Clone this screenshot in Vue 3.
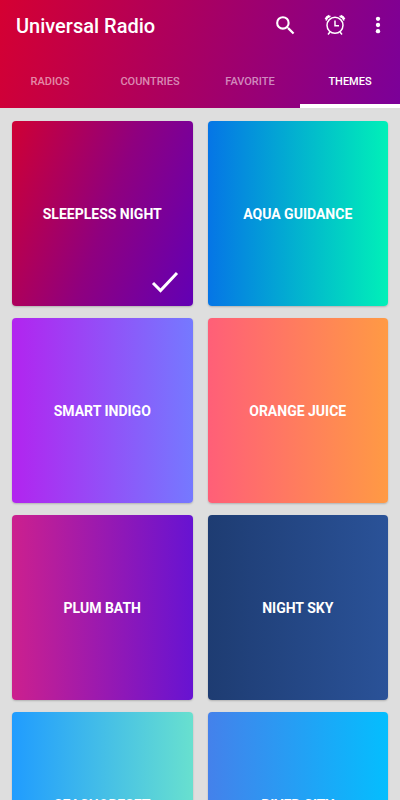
<template>
  <div class="screen">
    <header class="app-header">
      <div class="toolbar">
        <h1>Universal Radio</h1>
        <button type="button" class="icon-button" aria-label="Search">
          <svg viewBox="0 0 24 24" width="25" height="25" fill="currentColor">
            <path d="M15.5 14h-.79l-.28-.27A6.47 6.47 0 0 0 16 9.5 6.5 6.5 0 1 0 9.5 16c1.61 0 3.09-.59 4.23-1.57l.27.28v.79l5 4.99L20.49 19zM9.5 14A4.5 4.5 0 1 1 14 9.5 4.49 4.49 0 0 1 9.5 14z" />
          </svg>
        </button>
        <button type="button" class="icon-button" aria-label="Alarm">
          <svg viewBox="0 0 24 24" width="24" height="24" fill="none" stroke="currentColor" stroke-width="1.5">
            <circle cx="12" cy="12.3" r="8" />
            <path d="M12 7.500v5.300h4M7 19l-2 2.500M17 19l2 2.500M3 7.500C3.500 5.500 5.500 3.800 7.500 3.300M2.300 6C3 4.500 4.500 3.200 6.300 2.500M21 7.500C20.500 5.500 18.500 3.800 16.500 3.300M21.700 6C21 4.500 19.500 3.200 17.700 2.500" />
          </svg>
        </button>
        <button type="button" class="icon-button more" aria-label="More options">
          <svg viewBox="0 0 24 24" width="26" height="26" fill="currentColor">
            <circle cx="12" cy="6.3" r="2" />
            <circle cx="12" cy="12" r="2" />
            <circle cx="12" cy="17.7" r="2" />
          </svg>
        </button>
      </div>
      <nav class="tabs">
        <button
          v-for="tab in tabs"
          :key="tab"
          type="button"
          :class="{ active: tab === activeTab }"
          @click="activeTab = tab"
        >{{ tab }}</button>
      </nav>
    </header>

    <main class="themes">
      <button
        v-for="theme in themes"
        :key="theme.id"
        type="button"
        class="card"
        :class="theme.id"
        :aria-pressed="theme.id === selected"
        @click="selected = theme.id"
      >
        {{ theme.name }}
        <svg v-if="theme.id === selected" class="check" viewBox="0 0 28 22" width="28" height="22">
          <path d="M2 12l7.500 7.500L26 2" fill="none" stroke="#fff" stroke-width="3" />
        </svg>
      </button>
    </main>
  </div>
</template>

<script setup>
import { ref } from 'vue'

const tabs = ['RADIOS', 'COUNTRIES', 'FAVORITE', 'THEMES']
const activeTab = ref('THEMES')

const themes = [
  { id: 'sleepless', name: 'SLEEPLESS NIGHT' },
  { id: 'aqua', name: 'AQUA GUIDANCE' },
  { id: 'indigo', name: 'SMART INDIGO' },
  { id: 'orange', name: 'ORANGE JUICE' },
  { id: 'plum', name: 'PLUM BATH' },
  { id: 'night', name: 'NIGHT SKY' },
  { id: 'seashore', name: 'SEACHORESET' },
  { id: 'river', name: 'RIVER CITY' }
]
const selected = ref('sleepless')
</script>

<style>
html, body {
  margin: 0;
  padding: 0;
  background: #dedede;
}

#app {
  height: 100vh;
}
</style>

<style scoped>
.screen {
  display: flex;
  flex-direction: column;
  height: 100%;
  overflow: hidden;
  font-family: Roboto, sans-serif;
  background: #dedede;
}

button {
  padding: 0;
  border: 0;
  background: none;
  font-family: inherit;
  color: #fff;
  cursor: pointer;
}

.app-header {
  flex: none;
  background: linear-gradient(105deg, #d50032 0%, #a80063 48%, #7b0099 100%);
}

.toolbar {
  display: flex;
  align-items: flex-start;
  height: 52px;
  padding: 0 4px 0 16px;
}

h1 {
  flex: 1;
  margin: 0;
  font-size: 20px;
  font-weight: 500;
  line-height: 52px;
  color: #fff;
}

.icon-button {
  display: flex;
  align-items: center;
  justify-content: center;
  width: 50px;
  height: 50px;
}

.icon-button.more {
  width: 36px;
}

.tabs {
  display: flex;
}

.tabs button {
  flex: 1;
  height: 56px;
  padding-top: 6px;
  border-bottom: 4px solid transparent;
  font-size: 11px;
  font-weight: 500;
  color: rgba(255, 255, 255, 0.55);
}

.tabs button.active {
  border-bottom-color: #fff;
  color: #fff;
}

.themes {
  flex: 1;
  display: grid;
  grid-template-columns: 1fr 1fr;
  grid-auto-rows: 185px;
  gap: 12px 15px;
  min-height: 0;
  padding: 13px 12px;
  overflow: hidden;
}

.card {
  position: relative;
  border-radius: 4px;
  box-shadow: 0 1px 2px rgba(0, 0, 0, 0.2);
  font-size: 14px;
  font-weight: 700;
}

.check {
  position: absolute;
  right: 14px;
  bottom: 13px;
}

.sleepless {
  background: linear-gradient(110deg, #cf0034, #8f007f 52%, #6200b5);
}

.aqua {
  background: linear-gradient(90deg, #0575e6, #00f0b8);
}

.indigo {
  background: linear-gradient(90deg, #b224ef, #7579ff);
}

.orange {
  background: linear-gradient(90deg, #ff5f78, #ff9a44);
}

.plum {
  background: linear-gradient(90deg, #cc208e, #6713d2);
}

.night {
  background: linear-gradient(90deg, #1e3c72, #2a5298);
}

.seashore {
  background: linear-gradient(90deg, #209cff, #68e0cf);
}

.river {
  background: linear-gradient(90deg, #4481eb, #04befe);
}
</style>
